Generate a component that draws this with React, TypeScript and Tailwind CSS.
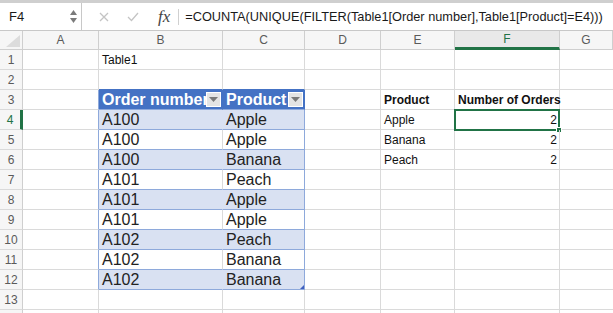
import React from "react";

const COLS = ["A", "B", "C", "D", "E", "F", "G"];

const orders: [string, string][] = [
  ["A100", "Apple"],
  ["A100", "Apple"],
  ["A100", "Banana"],
  ["A101", "Peach"],
  ["A101", "Apple"],
  ["A101", "Apple"],
  ["A102", "Peach"],
  ["A102", "Banana"],
  ["A102", "Banana"],
];

const summary: Record<number, [string, string]> = {
  3: ["Product", "Number of Orders"],
  4: ["Apple", "2"],
  5: ["Banana", "2"],
  6: ["Peach", "2"],
};

function Dropdown() {
  return (
    <div className="absolute right-[1px] top-[2px] w-[15px] h-[15px] bg-white p-[1px]">
      <div className="w-full h-full bg-[#e4e4e4] flex items-center justify-center">
        <svg width="9" height="5" viewBox="0 0 9 5">
          <path d="M0 0 L9 0 L4.5 5 Z" fill="#7a7a7a" />
        </svg>
      </div>
    </div>
  );
}

function FormulaBar() {
  return (
    <div className="h-[31px] flex border-t-[3px] border-[#cfcfcf] border-b border-b-[#c8c8c8] bg-white">
      <div className="w-[82px] flex items-center pl-[9px] pr-[3px] border-r border-[#c8c8c8] text-[13px] text-[#1a1a1a]">
        <span className="flex-1">F4</span>
        <div className="flex flex-col gap-[3px] mr-[1px]">
          <svg width="7" height="5" viewBox="0 0 7 5">
            <path d="M3.5 0 L7 5 L0 5 Z" fill="#7b7b7b" />
          </svg>
          <svg width="7" height="5" viewBox="0 0 7 5">
            <path d="M0 0 L7 0 L3.5 5 Z" fill="#7b7b7b" />
          </svg>
        </div>
      </div>
      <div className="flex items-center pl-[17px]">
        <svg width="10" height="10" viewBox="0 0 10 10">
          <path d="M1 1 L9 9 M9 1 L1 9" stroke="#c4c4c4" strokeWidth="1.3" />
        </svg>
        <svg className="ml-[18px]" width="12" height="10" viewBox="0 0 12 10">
          <path d="M1 5 L4.5 8.5 L11 1" stroke="#c4c4c4" strokeWidth="1.3" fill="none" />
        </svg>
        <span
          className="ml-[19px] italic text-[17px] text-[#444]"
          style={{ fontFamily: '"Liberation Serif", serif' }}
        >
          fx
        </span>
        <div className="ml-[8px] w-px h-[16px] bg-[#d0d0d0]" />
        <span className="ml-[6px] text-[12.75px] text-[#1a1a1a] whitespace-nowrap">
          =COUNTA(UNIQUE(FILTER(Table1[Order number],Table1[Product]=E4)))
        </span>
      </div>
    </div>
  );
}

function HeaderRow() {
  return (
    <>
      <div className="h-[19px] bg-[#f6f6f6] border-r border-b border-[#cfcfcf] relative">
        <svg className="absolute right-[2px] bottom-[2px]" width="14" height="12" viewBox="0 0 14 12">
          <path d="M14 0 L14 12 L0 12 Z" fill="#dcdcdc" />
        </svg>
      </div>
      {COLS.map((c) => (
        <div
          key={c}
          className={`h-[19px] flex items-center justify-center text-[12px] border-r ${
            c === "F"
              ? "bg-[#e9e9e9] text-[#217346] border-b-[3px] border-b-[#217346] border-r-[#cfcfcf]"
              : "bg-[#f6f6f6] text-[#5a5a5a] border-b border-[#cfcfcf]"
          }`}
        >
          {c}
        </div>
      ))}
    </>
  );
}

function Row({ n }: { n: number }) {
  const isHead = n === 3;
  const data = n >= 4 && n <= 12 ? orders[n - 4] : null;
  const inTable = n >= 3 && n <= 12;
  const band = data && n % 2 === 0;
  const sum = summary[n];

  const tableBg = isHead ? "bg-[#4472c4]" : band ? "bg-[#d9e1f2]" : "bg-white";
  const tableBottom = n === 2 ? "border-b-[#4472c4]" : inTable ? "border-b-[#8ea9db]" : "border-b-[#dadada]";

  return (
    <>
      <div
        className={`h-[20px] flex items-center justify-center text-[12px] bg-[#f6f6f6] border-b border-[#dadada] ${
          n === 4
            ? "text-[#217346] border-r-[3px] border-r-[#217346] bg-[#e9e9e9]"
            : "text-[#5a5a5a] border-r border-r-[#cfcfcf]"
        }`}
      >
        {n}
      </div>
      {/* A */}
      <div
        className={`h-[20px] border-b border-b-[#dadada] border-r ${
          inTable ? "border-r-[#8ea9db]" : "border-r-[#dadada]"
        }`}
      />
      {/* B */}
      <div
        className={`h-[20px] relative overflow-hidden border-b border-r flex items-center pl-[3px] whitespace-nowrap ${
          inTable ? tableBg : ""
        } ${tableBottom} ${
          isHead ? "border-r-[#4472c4]" : band ? "border-r-[#d9e1f2]" : "border-r-[#dadada]"
        } ${isHead ? "text-white font-bold text-[16px]" : data ? "text-[16px] text-[#222]" : "text-[12px] text-[#111]"}`}
      >
        {n === 1 && "Table1"}
        {isHead && "Order number"}
        {data && data[0]}
        {isHead && <Dropdown />}
      </div>
      {/* C */}
      <div
        className={`h-[20px] relative overflow-hidden border-b border-r flex items-center pl-[3px] whitespace-nowrap ${
          inTable ? tableBg : ""
        } ${tableBottom} ${
          isHead ? "border-r-[#4472c4]" : inTable ? "border-r-[#8ea9db]" : "border-r-[#dadada]"
        } ${isHead ? "text-white font-bold text-[16px]" : "text-[16px] text-[#222]"}`}
      >
        {isHead && "Product"}
        {data && data[1]}
        {isHead && <Dropdown />}
        {n === 12 && (
          <svg className="absolute right-0 bottom-0" width="4" height="4" viewBox="0 0 4 4">
            <path d="M4 0 L4 4 L0 4 Z" fill="#3f5fbf" />
          </svg>
        )}
      </div>
      {/* D */}
      <div className="h-[20px] border-b border-r border-[#dadada]" />
      {/* E */}
      <div
        className={`h-[20px] border-b border-r border-[#dadada] flex items-center pl-[3px] text-[12px] text-[#111] whitespace-nowrap ${
          n === 3 ? "font-bold" : ""
        }`}
      >
        {sum && sum[0]}
      </div>
      {/* F */}
      <div
        className={`h-[20px] relative border-b border-r border-[#dadada] flex items-center text-[12px] text-[#111] whitespace-nowrap ${
          n === 3 ? "font-bold pl-[3px]" : "justify-end pr-[2px]"
        }`}
      >
        {sum && sum[1]}
        {n === 4 && (
          <div className="absolute -left-[1px] -top-[1px] w-[106px] h-[22px] border-2 border-[#217346]">
            <div className="absolute -right-[4px] -bottom-[4px] w-[6px] h-[6px] bg-[#217346] border border-white" />
          </div>
        )}
      </div>
      {/* G */}
      <div className="h-[20px] border-b border-[#dadada]" />
    </>
  );
}

export default function App() {
  const rows = Array.from({ length: 14 }, (_, i) => i + 1);
  return (
    <div
      className="w-[613px] h-[313px] overflow-hidden bg-white"
      style={{ fontFamily: '"Liberation Sans", Arial, sans-serif' }}
    >
      <FormulaBar />
      <div className="grid grid-cols-[23px_76px_124px_82px_76px_74px_105px_53px]">
        <HeaderRow />
        {rows.map((n) => (
          <Row key={n} n={n} />
        ))}
      </div>
    </div>
  );
}
